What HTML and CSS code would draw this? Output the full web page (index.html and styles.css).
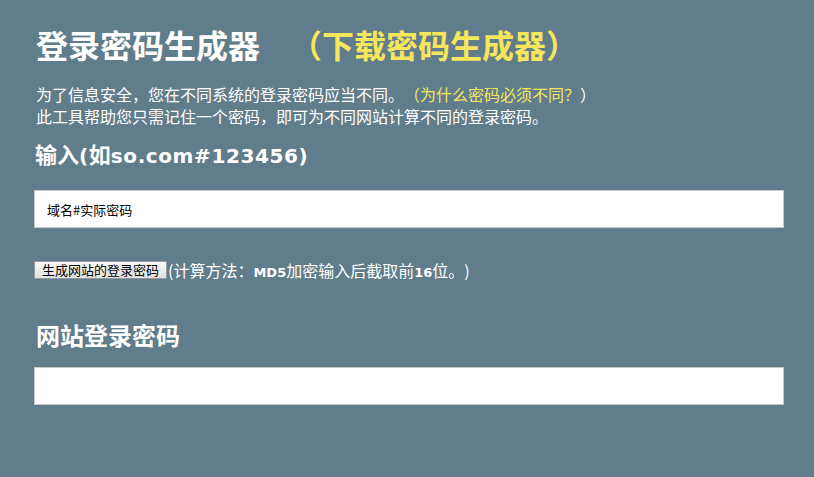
FILE: index.html
```html
<!DOCTYPE html>
<html lang="zh-CN">
<head>
<meta charset="utf-8">
<title>登录密码生成器</title>
<link rel="stylesheet" href="styles.css">
</head>
<body>
<div class="page">
  <h1 class="title">登录密码生成器<a class="download" href="#">（下载密码生成器）</a></h1>
  <p class="intro">为了信息安全，您在不同系统的登录密码应当不同。<a class="why" href="#">（为什么密码必须不同？</a>）<br>此工具帮助您只需记住一个密码，即可为不同网站计算不同的登录密码。</p>
  <h2 class="label">输入<span class="latin">(</span>如<span class="latin">so.com#123456)</span></h2>
  <input class="field first" type="text" value="域名#实际密码">
  <div class="action">
    <button class="gen" type="button">生成网站的登录密码</button><span class="note">(计算方法：<b>MD5</b>加密输入后截取前<b>16</b>位。)</span>
  </div>
  <h2 class="label result">网站登录密码</h2>
  <input class="field" type="text" value="">
</div>
</body>
</html>
```
FILE: styles.css
```css
html, body {
  margin: 0;
  padding: 0;
  background: #607d8b;
}
body {
  font-family: "Noto Sans CJK SC", sans-serif;
  color: #ffffff;
  text-spacing-trim: space-all;
}
.page {
  width: 750px;
  padding: 24px 0 0 34px;
}
.title {
  margin: 0;
  padding-left: 2px;
  font-size: 32px;
  line-height: 40px;
  font-weight: 700;
  white-space: nowrap;
}
.download {
  margin-left: 30px;
  color: #f6e65c;
  text-decoration: none;
}
.intro {
  margin: 19px 0 0;
  padding-left: 2px;
  font-size: 16px;
  line-height: 22px;
}
.why {
  color: #f6e65c;
  text-decoration: none;
}
.label {
  margin: 10px 0 0;
  padding-left: 1px;
  height: 32px;
  font-size: 22px;
  line-height: 32px;
  font-weight: 700;
  white-space: nowrap;
}
.latin {
  font-family: "DejaVu Sans", sans-serif;
  font-size: 20px;
  line-height: 20px;
  font-weight: 700;
  letter-spacing: 0.6px;
}
.label.result {
  margin-top: 39px;
  padding-left: 2px;
  font-size: 24px;
}
.field {
  display: block;
  box-sizing: border-box;
  width: 750px;
  height: 38px;
  margin: 16px 0 0;
  padding: 0 12px;
  border: 1px solid #c9c9c9;
  background: #ffffff;
  font-family: "Noto Sans CJK SC", sans-serif;
  font-size: 13px;
  color: #000000;
  outline: none;
}
.field.first {
  margin-top: 21px;
}
.action {
  display: flex;
  align-items: center;
  height: 20px;
  margin-top: 32px;
}
.gen {
  height: 18px;
  padding: 0 7px;
  border: 1px solid #9a9a9a;
  border-radius: 0;
  background: linear-gradient(#f8f8f8, #e0e0e0);
  font-family: "Noto Sans CJK SC", sans-serif;
  font-size: 13px;
  line-height: 16px;
  color: #000000;
}
.note {
  padding-left: 1px;
  height: 20px;
  font-size: 16px;
  line-height: 20px;
  white-space: nowrap;
}
.note b {
  font-family: "DejaVu Sans", sans-serif;
  font-size: 13px;
  line-height: 13px;
  font-weight: 700;
}
```
